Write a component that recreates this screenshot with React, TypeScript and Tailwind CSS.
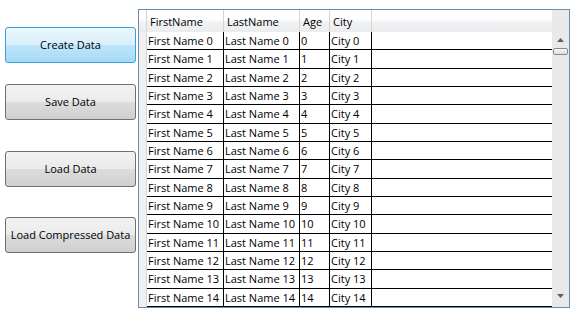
import React from "react";

const rows = Array.from({ length: 15 }, (_, i) => ({
  first: `First Name ${i}`,
  last: `Last Name ${i}`,
  age: String(i),
  city: `City ${i}`,
}));

function WinButton({ label, active }: { label: string; active?: boolean }) {
  return (
    <div
      className={
        active
          ? "w-[131px] h-[36px] rounded-[3px] border border-[#3c9fd5] bg-[linear-gradient(#eaf6fd_0%,#d9f0fc_50%,#bee6fd_50%,#a7d9f5_100%)] flex items-center justify-center text-[11px] text-black whitespace-nowrap"
          : "w-[131px] h-[36px] rounded-[3px] border border-[#707070] bg-[linear-gradient(#f2f2f2_0%,#ebebeb_50%,#dddddd_50%,#cfcfcf_100%)] flex items-center justify-center text-[11px] text-black whitespace-nowrap"
      }
    >
      {label}
    </div>
  );
}

export default function App() {
  return (
    <div
      className="w-[576px] h-[315px] bg-white flex"
      style={{ fontFamily: '"Open Sans", "Noto Sans", sans-serif' }}
    >
      {/* BUTTONS */}
      <div className="w-[138px] pl-[5px] flex flex-col">
        <div className="mt-[27px]">
          <WinButton label="Create Data" active />
        </div>
        <div className="mt-[21px]">
          <WinButton label="Save Data" />
        </div>
        <div className="mt-[31px]">
          <WinButton label="Load Data" />
        </div>
        <div className="mt-[30px]">
          <WinButton label="Load Compressed Data" />
        </div>
      </div>

      {/* GRID */}
      <div className="mt-[9px] w-[432px] h-[299px] border border-[#688caf] flex text-[11px] leading-none text-black overflow-hidden">
        <div className="flex-1 flex flex-col min-w-0">
          {/* header */}
          <div className="h-[22px] shrink-0 flex bg-[linear-gradient(#ffffff_0%,#ffffff_40%,#f1f2f4_55%,#eaecef_100%)]">
            <div className="w-[8px] border-r border-[#d5d5d5]" />
            <div className="w-[77px] border-r border-[#d5d5d5] pl-[3px] flex items-center">FirstName</div>
            <div className="w-[76px] border-r border-[#d5d5d5] pl-[3px] flex items-center">LastName</div>
            <div className="w-[30px] border-r border-[#d5d5d5] pl-[3px] flex items-center">Age</div>
            <div className="w-[42px] border-r border-[#d5d5d5] pl-[3px] flex items-center">City</div>
            <div className="flex-1" />
          </div>
          {/* rows */}
          <div className="flex flex-col">
            {rows.map((r) => (
              <div key={r.first} className="h-[18.33px] flex overflow-hidden">
                <div className="w-[8px] bg-[#f0f0f0] border-r border-[#d5d5d5]" />
                <div className="flex-1 flex border-b border-black">
                  <div className="w-[77px] border-r border-black pl-[1px] flex items-center whitespace-nowrap overflow-hidden">{r.first}</div>
                  <div className="w-[76px] border-r border-black pl-[1px] flex items-center whitespace-nowrap overflow-hidden">{r.last}</div>
                  <div className="w-[30px] border-r border-black pl-[1px] flex items-center">{r.age}</div>
                  <div className="w-[42px] border-r border-black pl-[1px] flex items-center whitespace-nowrap overflow-hidden">{r.city}</div>
                  <div className="flex-1" />
                </div>
              </div>
            ))}
          </div>
        </div>

        {/* scrollbar */}
        <div className="w-[17px] shrink-0 bg-[#e9e9e9] flex flex-col items-center">
          <svg width="7" height="4" viewBox="0 0 7 4" className="mt-[28px]">
            <path d="M0 4 L3.5 0 L7 4 Z" fill="#606060" />
          </svg>
          <div className="mt-[6px] w-[15px] h-[7px] rounded-[2px] border border-[#8a8a8a] bg-[linear-gradient(#f8f8f8,#dcdcdc)]" />
          <div className="flex-1" />
          <svg width="7" height="4" viewBox="0 0 7 4" className="mb-[9px]">
            <path d="M0 0 L7 0 L3.5 4 Z" fill="#606060" />
          </svg>
        </div>
      </div>
    </div>
  );
}
